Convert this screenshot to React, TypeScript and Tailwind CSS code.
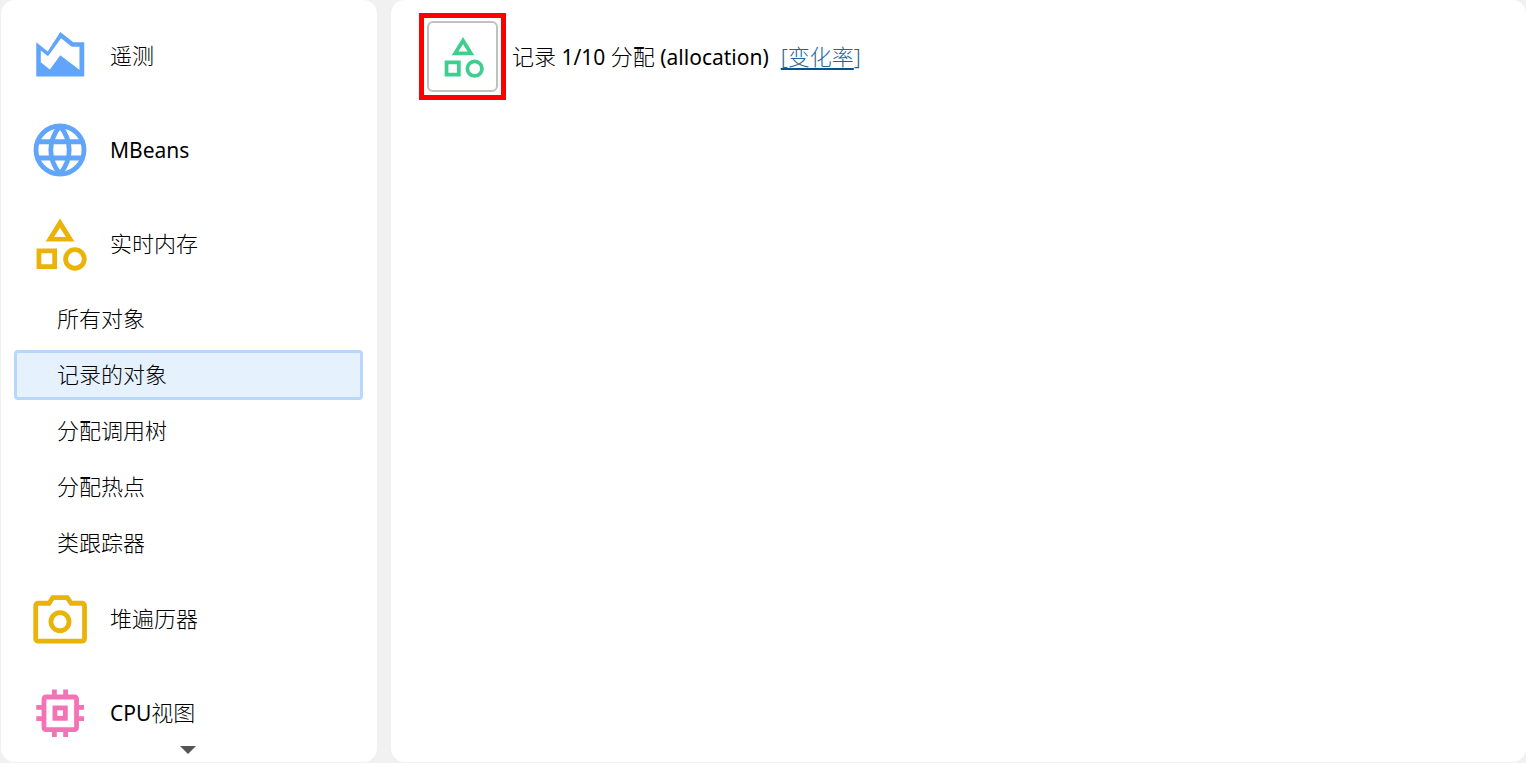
import React, { useState } from 'react'

type IconProps = {
  className?: string
}

type Section = {
  id: string
  latin?: string
  label?: string
  icon: React.ReactNode
  children?: string[]
}

const TelemetryIcon = ({ className }: IconProps) => (
  <svg viewBox="0 0 24 24" className={className} fill="currentColor" fillRule="evenodd" aria-hidden="true">
    <path d="M3.1 6.8 7.4 10.3 12.1 3 17 6.8h4.1v12.9h-18zM4.8 9.9v4.4l3.4 2.8L12.1 11.7l7.2 5.5V8.5h-2.9L12.4 5.3 7.5 12.1z" />
  </svg>
)

const GlobeIcon = ({ className }: IconProps) => (
  <svg viewBox="0 0 24 24" className={className} fill="none" stroke="currentColor" strokeWidth="1.8" aria-hidden="true">
    <circle cx="12" cy="12" r="9" />
    <path d="M12 3C7.4 8.6 7.4 15.4 12 21M12 3c4.6 5.6 4.6 12.4 0 18M3.5 8.9h17M3.5 15h17" />
  </svg>
)

const ShapesIcon = ({ className }: IconProps) => (
  <svg viewBox="0 0 24 24" className={className} fill="currentColor" fillRule="evenodd" aria-hidden="true">
    <path d="m12 2.4-5.4 8.7h10.8zm0 3.5 2.2 3.5H9.8z" />
    <path d="M3.2 13.7h7.7v7.7H3.2zM5 15.5v4.1h4.1v-4.1z" />
    <circle cx="17.6" cy="17.6" r="3.5" fill="none" stroke="currentColor" strokeWidth="1.8" />
  </svg>
)

const CameraIcon = ({ className }: IconProps) => (
  <svg viewBox="0 0 24 24" className={className} fill="none" stroke="currentColor" strokeWidth="1.8" aria-hidden="true">
    <path d="M3.8 6.1h4.1L9.3 4h5.4l1.5 2.1h4.1c.5 0 .9.4.9.9v12.4c0 .5-.4.9-.9.9H3.8c-.5 0-.9-.4-.9-.9V7c0-.5.4-.9.9-.9z" />
    <circle cx="12" cy="13" r="3.4" />
  </svg>
)

const ChipIcon = ({ className }: IconProps) => (
  <svg viewBox="0 0 24 24" className={className} fill="none" stroke="currentColor" strokeWidth="1.8" aria-hidden="true">
    <rect x="6" y="6" width="12.2" height="12.2" rx="0.7" />
    <rect x="10.1" y="10.1" width="3.9" height="3.9" />
    <path d="M9.9 3.2v3M14.1 3.2v3M9.9 18v3M14.1 18v3M3.1 9.9h3M3.1 14.1h3M18 9.9h3M18 14.1h3" />
  </svg>
)

const sections: Section[] = [
  { id: 'telemetry', label: '遥测', icon: <TelemetryIcon className="size-16 text-[#60a5fa]" /> },
  { id: 'mbeans', latin: 'MBeans', icon: <GlobeIcon className="size-16 text-[#60a5fa]" /> },
  {
    id: 'memory',
    label: '实时内存',
    icon: <ShapesIcon className="size-16 text-[#eab308]" />,
    children: ['所有对象', '记录的对象', '分配调用树', '分配热点', '类跟踪器'],
  },
  { id: 'heap', label: '堆遍历器', icon: <CameraIcon className="size-16 text-[#eab308]" /> },
  { id: 'cpu', latin: 'CPU', label: '视图', icon: <ChipIcon className="size-16 text-[#f472b6]" /> },
]

// Latin runs are set a little smaller than the Chinese ones
const Latin = ({ children }: { children: React.ReactNode }) => (
  <span className="text-[21px] font-normal">{children}</span>
)

const App = () => {
  const [selected, setSelected] = useState('记录的对象')

  return (
    <div className="flex h-screen gap-3.5 bg-[#f1f1f1] pb-px pl-px font-['Noto_Sans','Noto_Sans_CJK_SC',sans-serif] text-[22px] leading-8 font-light text-black">
      <nav className="relative w-94 shrink-0 overflow-hidden rounded-[14px] bg-white pt-[9px]">
        {sections.map((section) => (
          <div key={section.id}>
            <button className="flex h-[94px] w-full items-center gap-[18px] pl-[27px] text-left">
              {section.icon}
              <span className="pb-0.5">
                {section.latin && <Latin>{section.latin}</Latin>}
                {section.label}
              </span>
            </button>

            {section.children && (
              <div className="flex flex-col gap-1.5 pt-[3px] pr-3.5 pb-1 pl-[13px]">
                {section.children.map((item) => (
                  <button
                    key={item}
                    onClick={() => setSelected(item)}
                    className={`flex h-[50px] items-center rounded-[4px] border-3 pb-0.5 pl-10 text-left ${
                      item === selected ? 'border-[#b7d7fc] bg-[#e6f1fe]' : 'border-transparent'
                    }`}
                  >
                    {item}
                  </button>
                ))}
              </div>
            )}
          </div>
        ))}

        {/* More items below */}
        <div className="absolute inset-x-0 bottom-2 flex justify-center pr-0.5 text-[#555555]">
          <svg viewBox="0 0 16 8" className="h-2 w-4" fill="currentColor" aria-hidden="true">
            <path d="M0 0h16L8 8z" />
          </svg>
        </div>
      </nav>

      <main className="min-w-0 flex-1 rounded-[14px] bg-white pt-[13px] pl-7">
        <div className="flex items-center gap-1.5">
          <div className="border-5 border-[#ff0000] p-[3px]">
            <button
              aria-label="记录分配"
              className="flex size-[71px] items-center justify-center rounded-[6px] border-2 border-[#c0c0c0]"
            >
              <ShapesIcon className="size-[50px] text-[#3ecf8e]" />
            </button>
          </div>
          <p>
            记录<Latin> 1/10 </Latin>分配<Latin> (allocation)</Latin>
            <a href="#rate" className="ml-3 text-[#1f66a0]">
              <span className="underline decoration-[#00558f] decoration-2 underline-offset-3">[变化率</span>]
            </a>
          </p>
        </div>
      </main>
    </div>
  )
}

export default App
